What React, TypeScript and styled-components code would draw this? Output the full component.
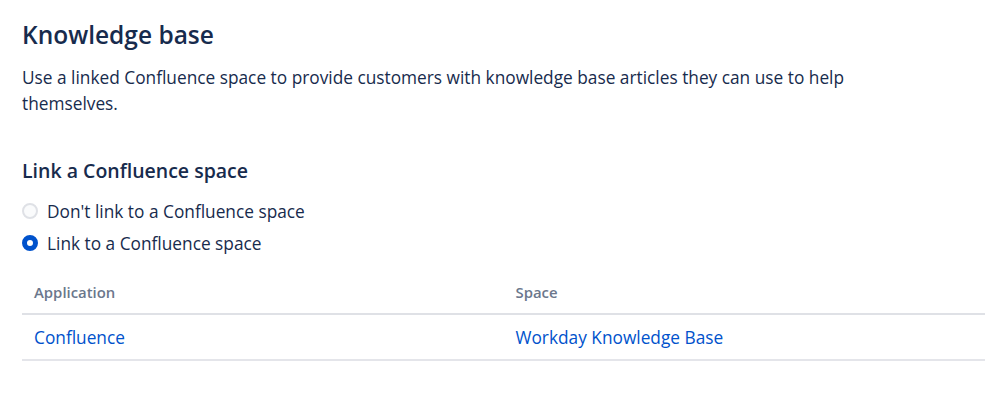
import React from "react";
import styled, { createGlobalStyle } from "styled-components";

const Global = createGlobalStyle`
  html, body { margin: 0; padding: 0; background: #fff; }
  body { font-family: "Open Sans", "Noto Sans", sans-serif; color: #172B4D; }
`;

const Page = styled.div`
  padding: 19px 14px 0 22px;
  display: flex;
  flex-direction: column;
`;

const Title = styled.h1`
  margin: 0;
  font-size: 24.5px;
  line-height: 32px;
  font-weight: 600;
  color: #172B4D;
`;

const Description = styled.p`
  margin: 14px 0 0;
  font-size: 17.3px;
  line-height: 26px;
  max-width: 850px;
  color: #172B4D;
`;

const SubTitle = styled.h2`
  margin: 40px 0 0;
  font-size: 19.5px;
  line-height: 28px;
  font-weight: 600;
  color: #172B4D;
`;

const RadioGroup = styled.div`
  display: flex;
  flex-direction: column;
  margin-top: 10px;
`;

const RadioRow = styled.label`
  display: flex;
  align-items: center;
  gap: 9px;
  height: 32px;
  font-size: 17.3px;
  color: #172B4D;
`;

const RadioDot = styled.span<{ $checked?: boolean }>`
  width: 16px;
  height: 16px;
  border-radius: 50%;
  box-sizing: border-box;
  background: ${(p) => (p.$checked ? "#fff" : "#FAFBFC")};
  border: ${(p) => (p.$checked ? "5px solid #0052CC" : "2px solid #DFE1E6")};
`;

const Table = styled.table`
  margin-top: 11px;
  width: 963px;
  border-collapse: collapse;
`;

const Th = styled.th`
  text-align: left;
  font-size: 14.9px;
  font-weight: 600;
  color: #6B778C;
  padding: 0 12px;
  height: 44px;
  box-sizing: border-box;
  border-bottom: 2px solid #DFE1E6;
  width: 50%;
`;

const Td = styled.td`
  font-size: 17.3px;
  padding: 0 12px;
  height: 46px;
  box-sizing: border-box;
  border-bottom: 2px solid #E4E5EA;
`;

const Link = styled.a`
  color: #0052CC;
  text-decoration: none;
`;

export default function App() {
  return (
    <>
      <Global />
      <Page>
        <Title>Knowledge base</Title>
        <Description>
          Use a linked Confluence space to provide customers with knowledge base articles they can use to help
          themselves.
        </Description>
        <SubTitle>Link a Confluence space</SubTitle>
        <RadioGroup>
          <RadioRow>
            <RadioDot />
            Don't link to a Confluence space
          </RadioRow>
          <RadioRow>
            <RadioDot $checked />
            Link to a Confluence space
          </RadioRow>
        </RadioGroup>
        <Table>
          <thead>
            <tr>
              <Th>Application</Th>
              <Th>Space</Th>
            </tr>
          </thead>
          <tbody>
            <tr>
              <Td><Link href="#">Confluence</Link></Td>
              <Td><Link href="#">Workday Knowledge Base</Link></Td>
            </tr>
          </tbody>
        </Table>
      </Page>
    </>
  );
}
